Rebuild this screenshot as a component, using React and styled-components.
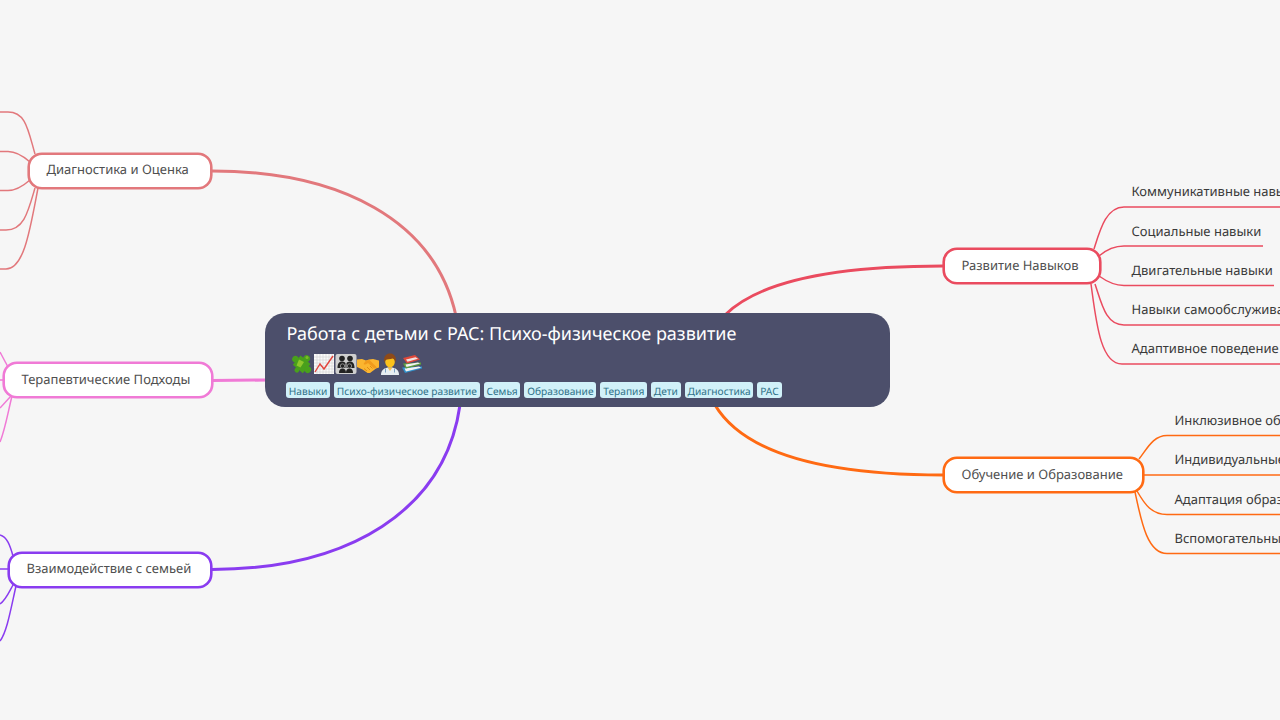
import React from "react";
import styled, { createGlobalStyle } from "styled-components";

const GlobalStyle = createGlobalStyle`
  html, body {
    margin: 0;
    padding: 0;
    background: #f6f6f6;
    overflow: hidden;
  }
`;

const Canvas = styled.div`
  position: relative;
  width: 1280px;
  height: 720px;
  overflow: hidden;
  background: #f6f6f6;
  font-family: "Noto Sans", "Open Sans", sans-serif;
  text-rendering: geometricPrecision;
`;

const Wires = styled.svg`
  position: absolute;
  left: 0;
  top: 0;
  fill: none;
`;

const Root = styled.div`
  position: absolute;
  left: 265px;
  top: 313px;
  width: 625px;
  height: 94px;
  box-sizing: border-box;
  padding: 9px 22px 0 21.5px;
  border-radius: 20px;
  background: #4c4f6b;
  color: #fff;
`;

const Title = styled.div`
  font-size: 18px;
  line-height: 24px;
  white-space: nowrap;
`;

const Emojis = styled.div`
  display: flex;
  height: 22px;
  margin: 7px 0 7px 4px;
`;

const Tags = styled.div`
  display: flex;
  gap: 4px;
  margin-left: -0.5px;
`;

const Tag = styled.span`
  height: 16px;
  padding: 0 2.8px;
  border-radius: 3px;
  background: #d1f1f9;
  color: #2f7288;
  font-size: 10.2px;
  line-height: 18px;
  white-space: nowrap;
`;

const Branch = styled.div`
  position: absolute;
  left: ${(p) => p.$x}px;
  top: ${(p) => p.$y}px;
  width: ${(p) => p.$w}px;
  height: 36px;
  box-sizing: border-box;
  display: flex;
  align-items: center;
  padding: 0 0 3px 16.5px;
  border: 2px solid ${(p) => p.$color};
  border-radius: 14px;
  box-shadow: 0 0 0 0.6px ${(p) => p.$color};
  background: #fff;
  color: #4f4f4f;
  font-size: 13px;
  white-space: nowrap;
`;

const Leaf = styled.div`
  position: absolute;
  left: ${(p) => p.$x}px;
  top: ${(p) => p.$y}px;
  color: #3a3a3a;
  font-size: 13px;
  line-height: 18px;
  white-space: nowrap;
`;

const branches = [
  { label: "Диагностика и Оценка", x: 28, y: 152.5, w: 183.5, color: "#e2787c" },
  { label: "Терапевтические Подходы", x: 3, y: 362, w: 209.5, color: "#f07ad6" },
  { label: "Взаимодействие с семьей", x: 8, y: 551.5, w: 203.5, color: "#8a3cf0" },
  { label: "Развитие Навыков", x: 943, y: 248, w: 158, color: "#ea4b5f" },
  { label: "Обучение и Образование", x: 943, y: 457, w: 201, color: "#ff6a13" },
];

const leaves = [
  { label: "Коммуникативные навыки", x: 1131.5, y: 182 },
  { label: "Социальные навыки", x: 1131.5, y: 222 },
  { label: "Двигательные навыки", x: 1131.5, y: 261 },
  { label: "Навыки самообслуживания", x: 1131.5, y: 300 },
  { label: "Адаптивное поведение", x: 1131.5, y: 339 },
  { label: "Инклюзивное образование", x: 1174.5, y: 411 },
  { label: "Индивидуальные программы", x: 1174.5, y: 450 },
  { label: "Адаптация образовательной среды", x: 1174.5, y: 490 },
  { label: "Вспомогательные технологии", x: 1174.5, y: 529 },
];

const tags = ["Навыки", "Психо-физическое развитие", "Семья", "Образование", "Терапия", "Дети", "Диагностика", "РАС"];

const wires = [
  { color: "#e2787c", width: 3, d: "M212 171C340 171 435 220 456 316" },
  { color: "#f07ad6", width: 3, d: "M212 380.5L268 380" },
  { color: "#8a3cf0", width: 3, d: "M212 569.5C350 569 445 510 460 405" },
  { color: "#ea4b5f", width: 3, d: "M943 266C840 266 760 280 725 315" },
  { color: "#ff6a13", width: 3, d: "M943 475C830 475 745 455 715 405" },

  { color: "#e2787c", width: 1.5, d: "M0 112H8C26 112 28 130 35 154" },
  { color: "#e2787c", width: 1.5, d: "M0 151.500H8C16 151.500 22 155 30 162" },
  { color: "#e2787c", width: 1.5, d: "M0 190.500H8C16 190.500 22 187 30 180" },
  { color: "#e2787c", width: 1.5, d: "M0 230H6C24 230 28 212 35 188" },
  { color: "#e2787c", width: 1.5, d: "M0 269H6C24 269 30 230 38 188" },

  { color: "#f07ad6", width: 1.5, d: "M0 352L8 367" },
  { color: "#f07ad6", width: 1.5, d: "M0 380H4" },
  { color: "#f07ad6", width: 1.5, d: "M0 408L11 396" },
  { color: "#f07ad6", width: 1.5, d: "M0 442C5 430 8 412 12 396" },

  { color: "#8a3cf0", width: 1.5, d: "M0 535C7 537 10 545 13 556" },
  { color: "#8a3cf0", width: 1.5, d: "M0 569H8" },
  { color: "#8a3cf0", width: 1.5, d: "M0 604C6 600 9 592 13 585" },
  { color: "#8a3cf0", width: 1.5, d: "M0 641C7 632 11 608 16 586" },

  { color: "#ea4b5f", width: 1.5, d: "M1094 249C1100 230 1106 207 1124 207H1280" },
  { color: "#ea4b5f", width: 1.5, d: "M1099 256C1106 250 1114 246 1124 246H1263" },
  { color: "#ea4b5f", width: 1.5, d: "M1099 276C1106 281 1114 285.500 1124 285.500H1274" },
  { color: "#ea4b5f", width: 1.5, d: "M1095 284C1102 305 1106 325 1124 325H1280" },
  { color: "#ea4b5f", width: 1.5, d: "M1091 284C1096 320 1100 364 1122 364H1280" },

  { color: "#ff6a13", width: 1.5, d: "M1139 459C1147 449 1153 435.500 1167 435.500H1280" },
  { color: "#ff6a13", width: 1.5, d: "M1144 475H1280" },
  { color: "#ff6a13", width: 1.5, d: "M1137 491C1145 505 1152 514.500 1167 514.500H1280" },
  { color: "#ff6a13", width: 1.5, d: "M1135 492C1141 520 1147 553.500 1167 553.500H1280" },
];

const Puzzle = () => (
  <svg width="22" height="22" viewBox="0 0 22 22">
    <g transform="rotate(40 11 11)" fill="#49a01c">
      <rect x="4.500" y="5.500" width="13" height="12" />
      <circle cx="11" cy="3.800" r="3.400" />
      <circle cx="19" cy="11.500" r="3.400" />
      <circle cx="3" cy="11.500" r="3.400" />
      <circle cx="11" cy="19" r="2.400" />
    </g>
    <path fill="#8fc62c" d="M8 6.500l5 2.500-3.500 5.500-4-2z" />
    <circle cx="16" cy="4.500" r="1.500" fill="#7dbb26" />
  </svg>
);

const Chart = () => (
  <svg width="22" height="22" viewBox="0 0 22 22">
    <rect x="1" y="1" width="20" height="20" fill="#fafafa" />
    <path stroke="#d4d4d4" strokeWidth=".7" d="M4 1v20M7 1v20M10 1v20M13 1v20M16 1v20M19 1v20M1 4h20M1 7h20M1 10h20M1 13h20M1 16h20M1 19h20" />
    <path fill="none" stroke="#e2443c" strokeWidth="1.4" d="M2 19l5-8 4 5 9-13" />
  </svg>
);

const Family = () => (
  <svg width="22" height="22" viewBox="0 0 22 22">
    <rect x="0.500" y="1" width="21" height="20" rx="2" fill="#cfcfcf" />
    <g fill="#222">
      <circle cx="7" cy="5.500" r="2.800" />
      <circle cx="15" cy="5.500" r="2.800" />
      <path d="M2.500 15c0-5 2-6.500 4.500-6.500 1.500 0 2.500.5 3.500 1.500v5zM11.500 10c1-1 2-1.500 3.500-1.500 2.500 0 4.500 1.500 4.500 6.500h-8z" />
      <circle cx="7.500" cy="13" r="2.200" stroke="#cfcfcf" strokeWidth=".6" />
      <circle cx="14.500" cy="13" r="2.200" stroke="#cfcfcf" strokeWidth=".6" />
      <path d="M4 20c0-3 1-4.500 3.500-4.500S11 17 11 20zM11 20c0-3 1-4.500 3.500-4.500S18 17 18 20z" />
    </g>
  </svg>
);

const Handshake = () => (
  <svg width="22" height="22" viewBox="0 0 22 22">
    <path fill="#fbb52f" d="M0 6.500l5-.5 4 1.500 3-1 4-.5 6 1.500v7l-3 1-6 4.500-2.500 0-5-3.500L0 14z" />
    <path fill="#f09a1c" d="M9 7.500l-2.500 3.500c1.500 1 3 .5 4.500-1l6 5.500 3-1-7.500-7.500z" />
    <path fill="none" stroke="#d9820f" strokeWidth=".8" d="M7 15.500l3 2.500M10 14l3 3M13 13l2.500 2.500" />
  </svg>
);

const Doctor = () => (
  <svg width="22" height="22" viewBox="0 0 22 22">
    <path fill="#e6edf2" d="M2 22c0-5 3-7.500 9-7.500s9 2.500 9 7.500z" />
    <path fill="#f7c04a" d="M8.500 14.500h5L11 18z" />
    <path fill="none" stroke="#6f9bc0" strokeWidth=".9" d="M6.500 15.500v4M15.500 15.500v4" />
    <ellipse cx="11" cy="9" rx="4.800" ry="5.300" fill="#fcc21b" />
    <path fill="#8d4a1a" d="M5.300 10C4 3 7.500 0.500 11 0.500S18 3 16.700 10C16.300 7.500 15.500 6 13.500 5.500 11.500 6.500 8 6.300 6.800 7 6 7.500 5.600 8.500 5.300 10z" />
  </svg>
);

const Books = () => (
  <svg width="22" height="22" viewBox="0 0 22 22">
    <path fill="#2f8fc9" d="M1 14.500l3 5.500 17-4.500v-2z" />
    <path fill="#f2f2f2" d="M3.500 15.500l1.500 3 15-3.800-2-1.200z" />
    <path fill="#5fa23c" d="M2 10.500l3 5 15-4v-2z" />
    <path fill="#f2f2f2" d="M4.500 11.500l1 2.500 13.500-3.500-2-1z" />
    <path fill="#e0483a" d="M2 5l4 5.500 13-4L14 2z" />
    <path fill="#f2f2f2" d="M5 6.500l1.500 2.200 10.500-3-2.500-1.500z" opacity=".9" />
  </svg>
);

export default function App() {
  return (
    <Canvas>
      <GlobalStyle />
      <Wires width="1280" height="720" viewBox="0 0 1280 720">
        {wires.map((wire) => (
          <path key={wire.d} d={wire.d} stroke={wire.color} strokeWidth={wire.width} />
        ))}
      </Wires>
      <Root>
        <Title>Работа с детьми с РАС: Психо-физическое развитие</Title>
        <Emojis>
          <Puzzle />
          <Chart />
          <Family />
          <Handshake />
          <Doctor />
          <Books />
        </Emojis>
        <Tags>
          {tags.map((tag) => (
            <Tag key={tag}>{tag}</Tag>
          ))}
        </Tags>
      </Root>
      {branches.map((b) => (
        <Branch key={b.label} $x={b.x} $y={b.y} $w={b.w} $color={b.color}>
          {b.label}
        </Branch>
      ))}
      {leaves.map((l) => (
        <Leaf key={l.label} $x={l.x} $y={l.y}>
          {l.label}
        </Leaf>
      ))}
    </Canvas>
  );
}
